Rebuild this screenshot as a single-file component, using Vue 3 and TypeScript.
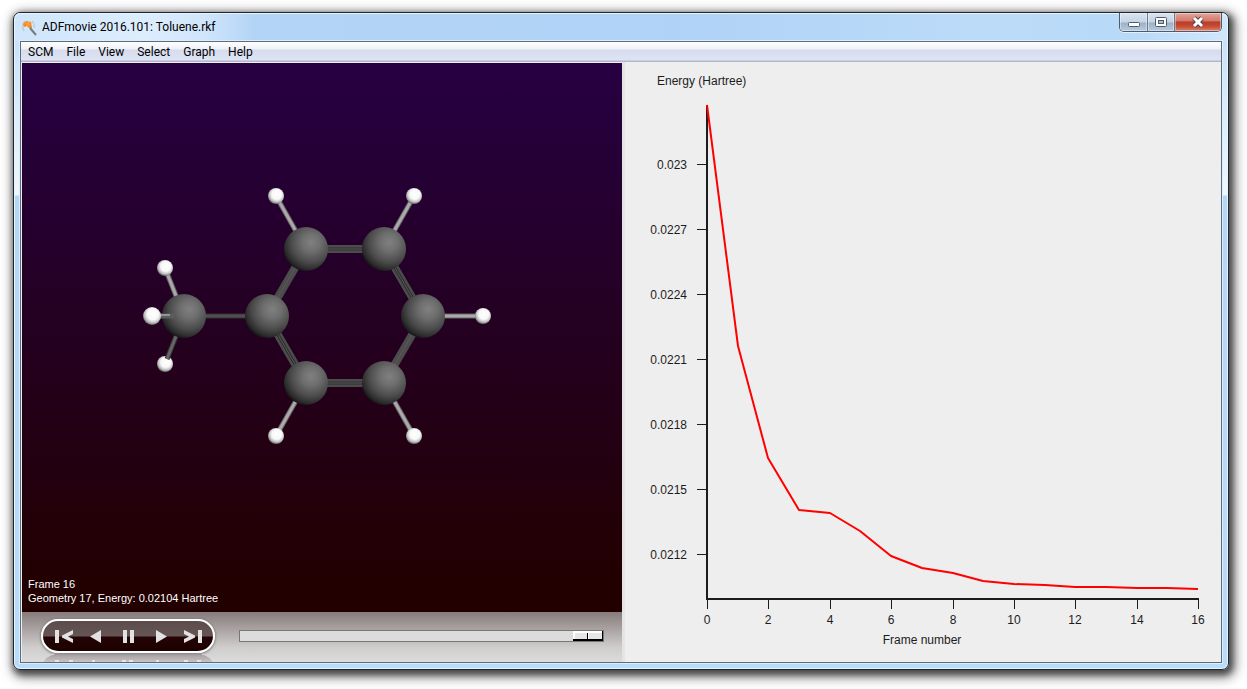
<script setup lang="ts">
import { ref } from 'vue'

const menus: string[] = ['SCM', 'File', 'View', 'Select', 'Graph', 'Help']

const frame = ref(16)

interface Atom { x: number; y: number }
interface Bond { a: Atom; b: Atom; kind: 'single' | 'double' | 'aromatic' }

const carbons: Atom[] = [
  { x: 162, y: 253 }, { x: 245, y: 253 }, { x: 284, y: 186 }, { x: 362, y: 186 },
  { x: 401, y: 253 }, { x: 362, y: 320 }, { x: 284, y: 320 },
]
const hydrogens: Atom[] = [
  { x: 254, y: 133 }, { x: 392, y: 133 }, { x: 461, y: 253 },
  { x: 392, y: 373 }, { x: 254, y: 373 }, { x: 143, y: 205 },
]
const ringBonds: Bond[] = [
  { a: carbons[1], b: carbons[2], kind: 'aromatic' },
  { a: carbons[2], b: carbons[3], kind: 'double' },
  { a: carbons[3], b: carbons[4], kind: 'double' },
  { a: carbons[4], b: carbons[5], kind: 'aromatic' },
  { a: carbons[5], b: carbons[6], kind: 'double' },
  { a: carbons[6], b: carbons[1], kind: 'double' },
]
const hydrogenBonds: { a: Atom; b: Atom }[] = [
  { a: carbons[2], b: hydrogens[0] }, { a: carbons[3], b: hydrogens[1] },
  { a: carbons[4], b: hydrogens[2] }, { a: carbons[5], b: hydrogens[3] },
  { a: carbons[6], b: hydrogens[4] }, { a: carbons[0], b: hydrogens[5] },
]

const energies: number[] = [
  0.023273, 0.022158, 0.021645, 0.021403, 0.021389, 0.021304, 0.021193, 0.021135, 0.021112,
  0.021075, 0.021061, 0.021056, 0.02105, 0.021047, 0.021045, 0.021043, 0.02104,
]
const yTicks: number[] = [0.023, 0.0227, 0.0224, 0.0221, 0.0218, 0.0215, 0.0212]
const xTicks: number[] = [0, 2, 4, 6, 8, 10, 12, 14, 16]

const px = (n: number): number => Math.round(85 + (n * 491) / 16)
const py = (e: number): number => Math.round(102 + ((0.023 - e) * 65) / 0.0003)
const curve = energies.map((e, i) => `${px(i)},${py(e)}`).join(' ')
</script>

<template>
  <div class="desktop">
    <main class="window">
      <header class="titlebar">
        <svg class="app-icon" width="18" height="18" viewBox="0 0 18 18" aria-hidden="true">
          <path d="M4 2Q0 6 3 12M11 2q3 3 2 7" fill="none" stroke="#c3cad2" stroke-width="1.500" />
          <path d="M2 5l3-3 5 1 1 6-3 0-2-2-3 1z" fill="#f58a1f" />
          <path d="M4 4l4-1 2 3-4 1z" fill="#ff9d3c" />
          <path d="M9 9l6 7" stroke="#777b80" stroke-width="2" />
        </svg>
        <h1>ADFmovie 2016.101: Toluene.rkf</h1>
        <div class="caption">
          <button type="button" class="cap" aria-label="Minimize">
            <svg width="14" height="12" viewBox="0 0 14 12"><rect x="1.500" y="6.500" width="11" height="4" rx="1" fill="#fff" stroke="#4f5a6b" /></svg>
          </button>
          <button type="button" class="cap" aria-label="Maximize">
            <svg width="14" height="12" viewBox="0 0 14 12"><rect x="1.500" y="1.500" width="11" height="9" rx="1" fill="#fff" stroke="#4f5a6b" /><rect x="4.500" y="4.500" width="5" height="3" fill="#a9bbd0" stroke="#4f5a6b" /></svg>
          </button>
          <button type="button" class="cap close" aria-label="Close">
            <svg width="14" height="12" viewBox="0 0 14 12"><path d="M3 2l8 8M11 2l-8 8" stroke="#57464f" stroke-width="5" /><path d="M3 2l8 8M11 2l-8 8" stroke="#fff" stroke-width="3" /></svg>
          </button>
        </div>
      </header>

      <div class="client">
        <nav class="menubar">
          <button v-for="m in menus" :key="m" type="button">{{ m }}</button>
        </nav>
        <div class="panes">
          <section class="movie">
            <div class="viewer">
              <svg class="molecule" viewBox="0 0 600 549" preserveAspectRatio="xMidYMid meet" role="img" aria-label="Toluene molecule">
                <defs>
                  <radialGradient id="carbon" cx="0.62" cy="0.35" r="0.7">
                    <stop offset="0" stop-color="#808080" /><stop offset="0.3" stop-color="#6e6e6e" />
                    <stop offset="0.65" stop-color="#4b4b4b" /><stop offset="0.88" stop-color="#2b2b2b" /><stop offset="1" stop-color="#101010" />
                  </radialGradient>
                  <radialGradient id="hydrogen" cx="0.55" cy="0.4" r="0.62">
                    <stop offset="0" stop-color="#fff" /><stop offset="0.5" stop-color="#f8f8f8" />
                    <stop offset="0.78" stop-color="#bbb" /><stop offset="1" stop-color="#555" />
                  </radialGradient>
                </defs>
                <line x1="162" y1="253" x2="245" y2="253" stroke="#333" stroke-width="5" />
                <line x1="162" y1="253" x2="245" y2="253" stroke="#505050" stroke-width="3" />
                <g v-for="(b, i) in ringBonds" :key="i">
                  <line :x1="b.a.x" :y1="b.a.y" :x2="b.b.x" :y2="b.b.y" stroke="#4c4c4c" stroke-width="8" />
                  <line v-if="b.kind === 'double'" :x1="b.a.x" :y1="b.a.y" :x2="b.b.x" :y2="b.b.y" stroke="#2c2c2c" stroke-width="3" />
                  <line :x1="b.a.x" :y1="b.a.y" :x2="b.b.x" :y2="b.b.y" stroke="#5a5a5a" stroke-width="1" />
                </g>
                <g v-for="(b, i) in hydrogenBonds" :key="'h' + i">
                  <line :x1="b.a.x" :y1="b.a.y" :x2="b.b.x" :y2="b.b.y" stroke="#666" stroke-width="5" />
                  <line :x1="b.a.x" :y1="b.a.y" :x2="b.b.x" :y2="b.b.y" stroke="#aaa" stroke-width="3" />
                </g>
                <circle cx="143" cy="301" r="8" fill="url(#hydrogen)" />
                <line x1="162" y1="253" x2="145" y2="296" stroke="#333" stroke-width="5" />
                <line x1="162" y1="253" x2="145" y2="296" stroke="#666" stroke-width="3" />
                <circle v-for="(c, i) in carbons" :key="'c' + i" :cx="c.x" :cy="c.y" r="22" fill="url(#carbon)" />
                <circle v-for="(h, i) in hydrogens" :key="'a' + i" :cx="h.x" :cy="h.y" r="8" fill="url(#hydrogen)" />
                <line x1="129" y1="253" x2="151" y2="253" stroke="#5c5c5c" stroke-width="5" stroke-linecap="round" />
                <line x1="129" y1="252" x2="148" y2="252" stroke="#949494" stroke-width="2" />
                <circle cx="130" cy="253" r="9" fill="url(#hydrogen)" />
              </svg>
              <p class="status">Frame {{ frame }}<br />Geometry {{ frame + 1 }}, Energy: 0.02104 Hartree</p>
            </div>
            <div class="controls">
              <div class="player-wrap">
                <div class="player">
                  <button type="button" aria-label="First frame"><svg width="18" height="13" viewBox="0 0 18 13"><path d="M0 0h4v13H0zM18 0v4l-5 2.500 5 2.500v4L7 7.500v-2z" /></svg></button>
                  <button type="button" aria-label="Play backward"><svg width="11" height="13" viewBox="0 0 11 13"><path d="M11 0v13L0 6.500z" /></svg></button>
                  <button type="button" class="pause" aria-label="Pause"><svg width="11" height="13" viewBox="0 0 11 13"><path d="M0 0h4v13H0zM7 0h4v13H7z" /></svg></button>
                  <button type="button" aria-label="Play"><svg width="11" height="13" viewBox="0 0 11 13"><path d="M0 0v13l11-6.500z" /></svg></button>
                  <button type="button" aria-label="Last frame"><svg width="18" height="13" viewBox="0 0 18 13"><path d="M14 0h4v13h-4zM0 0v4l5 2.500-5 2.500v4l11-5.500v-2z" /></svg></button>
                </div>
                <svg class="reflection" width="174" height="9" viewBox="0 0 174 9" aria-hidden="true">
                  <defs><linearGradient id="mirror" x1="0" y1="0" x2="0" y2="1"><stop offset="0" stop-color="#9a9191" /><stop offset="1" stop-color="#c3bdbd" /></linearGradient></defs>
                  <path d="M2 9Q5 3 13 1h148q8 2 11 8z" fill="url(#mirror)" opacity="0.8" />
                  <path d="M2 9Q5 3 13 1M161 1q8 2 11 8" fill="none" stroke="#dedada" stroke-width="1" />
                  <path d="M14 7h4v2h-4zM28 7h4v2h-4zM51 7h3v2h-3zM81 7h4v2h-4zM88 7h4v2h-4zM115 7h3v2h-3zM143 7h4v2h-4zM156 7h4v2h-4z" fill="#e6e6e6" />
                </svg>
              </div>
              <input v-model.number="frame" class="timeline" type="range" min="0" max="16" aria-label="Frame" />
            </div>
          </section>
          <section class="chart">
            <svg viewBox="0 0 599 600" preserveAspectRatio="xMidYMid meet" role="img" aria-label="Energy per frame">
              <text x="35" y="23">Energy (Hartree)</text>
              <g v-for="t in yTicks" :key="t">
                <rect class="ink" x="75" :y="py(t)" width="9" height="1" />
                <text x="65" :y="py(t) + 5" text-anchor="end">{{ t }}</text>
              </g>
              <g v-for="t in xTicks" :key="'x' + t">
                <rect class="ink" :x="px(t)" y="538" width="1" height="9" />
                <text :x="px(t)" y="562" text-anchor="middle">{{ t }}</text>
              </g>
              <rect class="ink" x="84" y="43" width="2" height="495" />
              <rect class="ink" x="84" y="536" width="493" height="2" />
              <polyline :points="curve" />
              <text x="300" y="582" text-anchor="middle">Frame number</text>
            </svg>
          </section>
        </div>
      </div>
    </main>
  </div>
</template>

<style>
body { background: #fff; }
</style>

<style scoped>
* { box-sizing: border-box; }
.desktop {
  display: flex;
  min-height: 100vh;
  padding: 12px 18px 19px 13px;
  overflow: hidden;
}
.window {
  flex: 1;
  display: flex;
  flex-direction: column;
  min-width: 0;
  padding: 0 6px 6px;
  border: 1px solid #20262e;
  border-radius: 7px;
  background:
    linear-gradient(#c2ddf8 0, #d9ebfc 90px, #f0f7fe 182px, #b4d7f8 183px, #b9dcfb 100%);
  box-shadow: inset 0 0 0 1px #e8f5ff, 2px 3px 6px 2px rgba(0, 0, 0, 0.55), 3px 4px 12px 4px rgba(0, 0, 0, 0.4);
}
.titlebar {
  display: flex;
  align-items: flex-start;
  height: 28px;
  margin: 0 -5px;
  padding: 0 5px 0 6px;
  border-radius: 6px 6px 0 0;
  background: linear-gradient(90deg, #cfe5fb 0, #dcedfd 130px, #d0e5fb 190px, #b3d4f6 240px, #b0d2f6 55%, #bcdbf9 80%, #b8d9f8 92%, #d0e6fb 100%);
  box-shadow: inset 0 1px 0 #e8f5ff;
}
.app-icon { margin-top: 6px; }
h1 {
  flex: 1;
  margin: 6px 0 0 3px;
  font: 12px/16px Roboto, "Open Sans", sans-serif;
  color: #000;
}
.caption {
  display: flex;
  height: 19px;
  border: 1px solid #4d5b6c;
  border-top: 0;
  border-radius: 0 0 5px 5px;
  overflow: hidden;
  box-shadow: 0 1px 0 #e4f2ff;
}
.cap {
  display: flex;
  align-items: center;
  justify-content: center;
  width: 28px;
  padding: 0;
  border: 0;
  border-right: 1px solid #6b7b8e;
  background: linear-gradient(#d9e4f0 0, #c5d4e4 9px, #9db1c8 10px, #b7cbe0 100%);
  box-shadow: inset 0 0 0 1px rgba(255, 255, 255, 0.4);
}
.cap:nth-child(2) { width: 27px; }
.close {
  width: 46px;
  border-right: 0;
  background: linear-gradient(#e3a79c 0, #d27868 8px, #b83a25 9px, #c9513b 14px, #dc8a71 100%);
}
.client {
  flex: 1;
  display: flex;
  flex-direction: column;
  border: 1px solid #5d6c7c;
  box-shadow: 0 0 0 1px #dcedfc;
  background: #eee;
  padding: 0 0 0 1px;
}
.menubar {
  display: flex;
  gap: 13px;
  height: 20px;
  padding: 0 7px;
  margin-left: -1px;
  background: linear-gradient(#fff 0, #eff1f8 7px, #d6dcee 8px, #dfe4f4 18px, #b3b7cc 19px);
}
.menubar button {
  padding: 0;
  border: 0;
  background: none;
  font: 12px/20px Roboto, "Open Sans", sans-serif;
  color: #000;
}
.panes {
  flex: 1;
  display: grid;
  grid-template-columns: minmax(0, 600fr) minmax(0, 599fr);
}
.movie {
  display: flex;
  flex-direction: column;
  padding-top: 1px;
}
.viewer {
  flex: 1;
  position: relative;
  background: linear-gradient(#260042, #240020 50%, #220000 95%);
}
.molecule { display: block; width: 100%; height: 100%; }
.status {
  position: absolute;
  left: 6px;
  bottom: 7px;
  margin: 0;
  font: 11px/14px "Liberation Sans", Arial, sans-serif;
  color: #fff;
}
.controls {
  display: flex;
  align-items: flex-start;
  height: 50px;
  padding: 7px 18px 0 19px;
  background: linear-gradient(#877b7b, #b0a9a9 40%, #cfcccc 70%, #dcdcdc);
}
.player-wrap { display: flex; flex-direction: column; width: 174px; }
.player {
  display: flex;
  align-items: center;
  justify-content: space-between;
  height: 34px;
  padding: 0 11px 0 12px;
  border: 2px solid #fff;
  border-radius: 17px;
  background: linear-gradient(#5d4c4c 0, #665555 15px, #240404 16px, #1e0000 100%);
  box-shadow: 0 1px 3px rgba(0, 0, 0, 0.5);
}
.player button { display: flex; padding: 0; border: 0; background: none; }
.player .pause { padding: 0 5px; }
.player path { fill: #e2e2e2; }
.timeline {
  flex: 1;
  appearance: none;
  min-width: 0;
  height: 12px;
  margin: 11px 0 0 24px;
  border: 1px solid #777;
  background: #dcdcdc;
}
.timeline::-webkit-slider-thumb {
  appearance: none;
  width: 30px;
  height: 10px;
  border: 0;
  background: linear-gradient(90deg, transparent 14px, #000 14px, #000 15px, #fff 15px, #fff 16px, transparent 16px), #e6e6e6;
  box-shadow: inset -1px -2px 0 #000, inset 2px 2px 0 #fff;
}
.chart { box-shadow: inset 3px 0 0 #e4e4e4; }
.chart svg { display: block; width: 100%; height: 100%; }
.chart text { font: 12px "Liberation Sans", Arial, sans-serif; fill: #1c1c1c; }
.ink { fill: #1c1c1c; shape-rendering: crispEdges; }
.chart polyline { fill: none; stroke: #f00; stroke-width: 2; stroke-linejoin: round; }
</style>
